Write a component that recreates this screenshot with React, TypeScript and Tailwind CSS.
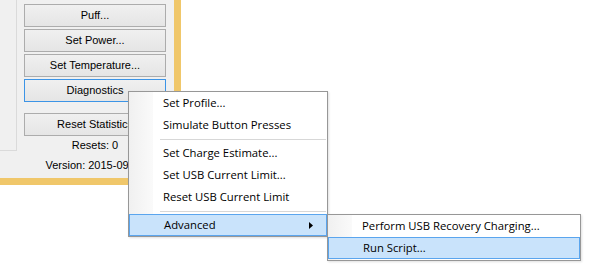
import React from 'react';

const btn =
  "h-[23px] w-full border border-[#acacac] bg-gradient-to-b from-[#f0f0f0] to-[#e5e5e5] text-[11px] text-black flex items-center justify-center";

function MenuItem({ label, active, arrow }: { label: string; active?: boolean; arrow?: boolean }) {
  return (
    <div
      className={`relative h-[22px] flex items-center pl-[34px] pr-3 ${
        active ? 'bg-[#c9e3fb] border border-[#5aa5ee] pl-[33px]' : ''
      }`}
    >
      <span className="flex-1 whitespace-nowrap">{label}</span>
      {arrow && (
        <svg width="4" height="7" viewBox="0 0 4 7" className="mr-[1px]">
          <polygon points="0,0 4,3.5 0,7" fill="#000" />
        </svg>
      )}
    </div>
  );
}

function Separator() {
  return (
    <div className="h-[6px] flex items-center pl-[31px] pr-[1px]">
      <div className="h-px w-full bg-[#d7d7d7]" />
    </div>
  );
}

export default function App() {
  return (
    <div className="relative w-[595px] h-[280px] bg-white overflow-hidden font-['Liberation_Sans',Arial,sans-serif]">
      {/* window frame */}
      <div className="w-[181px] bg-[#f0c76a] pr-[7px] pb-[7px]">
        <div className="w-[174px] h-[178px] bg-[#f0f0f0] flex">
          <div className="w-[17px] h-[151px] border-r border-b border-[#dadada] shrink-0" />
          <div className="flex flex-col w-[142px] ml-[7px] pt-[4px]">
            <div className="flex flex-col gap-[2px]">
              <div className={btn}>Puff...</div>
              <div className={btn}>Set Power...</div>
              <div className={btn}>Set Temperature...</div>
              <div className={`${btn} !border-[#3c94e6]`}>Diagnostics</div>
            </div>
            <div className={`${btn} mt-[11px]`}>Reset Statistics</div>
            <div className="text-[11px] text-black text-center mt-[1px] h-[17px] leading-[17px]">Resets: 0</div>
            <div className="text-[11px] text-black text-center mt-[3px] leading-[17px] whitespace-nowrap">Version: 2015-09-29</div>
          </div>
        </div>
      </div>

      {/* context menu */}
      <div className="absolute left-[128px] top-[91px] w-[200px] border border-[#979797] bg-white text-[11.3px] text-black font-['Open_Sans',sans-serif] shadow-[1px_1px_2px_rgba(0,0,0,0.12)]">
        <div className="absolute left-0 top-0 bottom-0 w-[24px] bg-gradient-to-r from-[#f0f0f0] to-[#fafafa]" />
        <MenuItem label="Set Profile..." />
        <MenuItem label="Simulate Button Presses" />
        <Separator />
        <MenuItem label="Set Charge Estimate..." />
        <MenuItem label="Set USB Current Limit..." />
        <MenuItem label="Reset USB Current Limit" />
        <Separator />
        <MenuItem label="Advanced" active arrow />
      </div>

      {/* submenu */}
      <div className="absolute left-[327px] top-[214px] w-[254px] border border-[#979797] bg-white text-[11.3px] text-black font-['Open_Sans',sans-serif] pb-[1px] shadow-[1px_1px_2px_rgba(0,0,0,0.12)]">
        <div className="absolute left-0 top-0 bottom-0 w-[24px] bg-gradient-to-r from-[#f0f0f0] to-[#fafafa]" />
        <MenuItem label="Perform USB Recovery Charging..." />
        <MenuItem label="Run Script..." active />
      </div>
    </div>
  );
}
